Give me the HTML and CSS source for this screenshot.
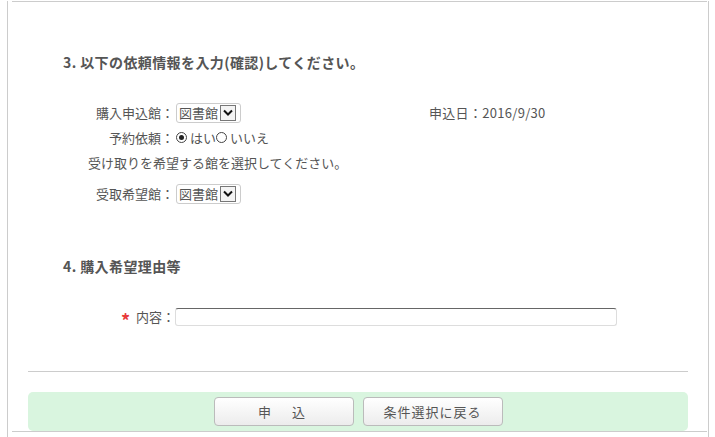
FILE: index.html
```html
<!DOCTYPE html>
<html lang="ja">

<head>
    <meta charset="UTF-8">
    <title>購入申込</title>
    <link rel="stylesheet" href="styles.css">
</head>

<body>
    <div id="page">
        <div class="top-line"></div>

        <h3 class="step step3">3. 以下の依頼情報を入力(確認)してください。</h3>

        <div class="form">
            <div class="row">
                <span class="label">購入申込館：</span>
                <span class="value">
                    <span class="sel"><span class="sel-text">図書館</span><span class="sel-btn"><svg width="10" height="7" viewBox="0 0 10 7"><path d="M1 1.5 L5 5.5 L9 1.5" fill="none" stroke="#111" stroke-width="2"/></svg></span></span>
                </span>
                <span class="date">申込日：2016/9/30</span>
            </div>
            <div class="row">
                <span class="label">予約依頼：</span>
                <span class="value">
                    <span class="radio on"></span><span class="r-text">はい</span><span class="radio"></span><span class="r-text">いいえ</span>
                </span>
            </div>
            <div class="row note">受け取りを希望する館を選択してください。</div>
            <div class="row row4">
                <span class="label">受取希望館：</span>
                <span class="value">
                    <span class="sel"><span class="sel-text">図書館</span><span class="sel-btn"><svg width="10" height="7" viewBox="0 0 10 7"><path d="M1 1.5 L5 5.5 L9 1.5" fill="none" stroke="#111" stroke-width="2"/></svg></span></span>
                </span>
            </div>
        </div>

        <h3 class="step step4">4. 購入希望理由等</h3>

        <div class="reason">
            <span class="req">*</span>
            <span class="label2">内容：</span>
            <span class="text-box"></span>
        </div>

        <div class="sep"></div>

        <div class="buttons">
            <span class="btn btn-apply">申　込</span>
            <span class="btn">条件選択に戻る</span>
        </div>

        <div class="bottom-line"></div>
    </div>
</body>

</html>
```

FILE: styles.css
```css
* {
    margin: 0;
    padding: 0;
}

body {
    font-family: "Noto Sans CJK JP", "Noto Sans", sans-serif;
    font-size: 13px;
    color: #555;
    background: #fff;
}

#page {
    margin-left: 7px;
    width: 700px;
    height: 437px;
    border-left: 1px solid #ccc;
    border-right: 1px solid #ccc;
}

.top-line {
    margin: 1px 1px 0 4px;
    border-top: 1px solid #ccc;
}

.step {
    font-size: 14px;
    font-weight: bold;
    line-height: 20px;
    letter-spacing: 0.4px;
    color: #555;
    padding-left: 55px;
    white-space: nowrap;
}

.step3 {
    margin-top: 50px;
}

.step4 {
    margin-top: 50px;
}

.form {
    margin: 28px 0 0 80px;
}

.row {
    display: flex;
    align-items: center;
    height: 25px;
    white-space: nowrap;
}

.row4 {
    margin-top: 6px;
}

.label {
    width: 86px;
    text-align: right;
}

.value {
    display: flex;
    align-items: center;
    width: 255px;
    padding-left: 2px;
    box-sizing: border-box;
}

.sel {
    display: inline-flex;
    align-items: center;
    height: 20px;
    width: 65px;
    border: 1px solid #ccc;
    border-radius: 3px;
    box-sizing: border-box;
    padding-left: 2px;
}

.sel-text {
    color: #555;
    line-height: 16px;
}

.sel-btn {
    display: inline-flex;
    align-items: center;
    justify-content: center;
    width: 16px;
    height: 16px;
    margin-left: 2px;
    border: 1px solid #777;
    box-sizing: border-box;
    background: #f4f4f4;
}

.radio {
    display: inline-block;
    width: 11px;
    height: 11px;
    border: 1px solid #444;
    border-radius: 50%;
    box-sizing: border-box;
    position: relative;
    margin-right: 3px;
}

.radio.on::after {
    content: "";
    position: absolute;
    left: 2px;
    top: 2px;
    width: 5px;
    height: 5px;
    border-radius: 50%;
    background: #222;
}

.date {
    color: #555;
    letter-spacing: 0.3px;
}

.reason {
    display: flex;
    align-items: center;
    height: 25px;
    margin-top: 28px;
    padding-left: 113px;
    white-space: nowrap;
}

.req {
    color: #e83a3a;
    font-size: 18px;
    font-weight: bold;
    width: 15px;
    line-height: 25px;
    padding-top: 4px;
    box-sizing: border-box;
    height: 25px;
}

.label2 {
    width: 39px;
    flex-shrink: 0;
}

.text-box {
    display: block;
    width: 442px;
    height: 18px;
    flex-shrink: 0;
    border: 1px solid #ddd;
    border-top-color: #666;
    border-radius: 3px;
    box-sizing: border-box;
}

.sep {
    margin: 42px 20px 0 20px;
    border-top: 1px solid #ccc;
}

.buttons {
    display: flex;
    justify-content: center;
    gap: 9px;
    margin: 20px 20px 0 20px;
    padding: 5px 0;
    background: #d9f5df;
    border-radius: 5px;
}

.btn {
    display: flex;
    align-items: center;
    justify-content: center;
    width: 140px;
    height: 29px;
    box-sizing: border-box;
    border: 1px solid #bbb;
    border-radius: 4px;
    background: linear-gradient(#fff, #ececec);
    color: #555;
    letter-spacing: 1px;
}

.btn-apply {
    letter-spacing: 4px;
}

.bottom-line {
    margin: 0 1px 0 4px;
    border-top: 1px solid #ccc;
}
```
